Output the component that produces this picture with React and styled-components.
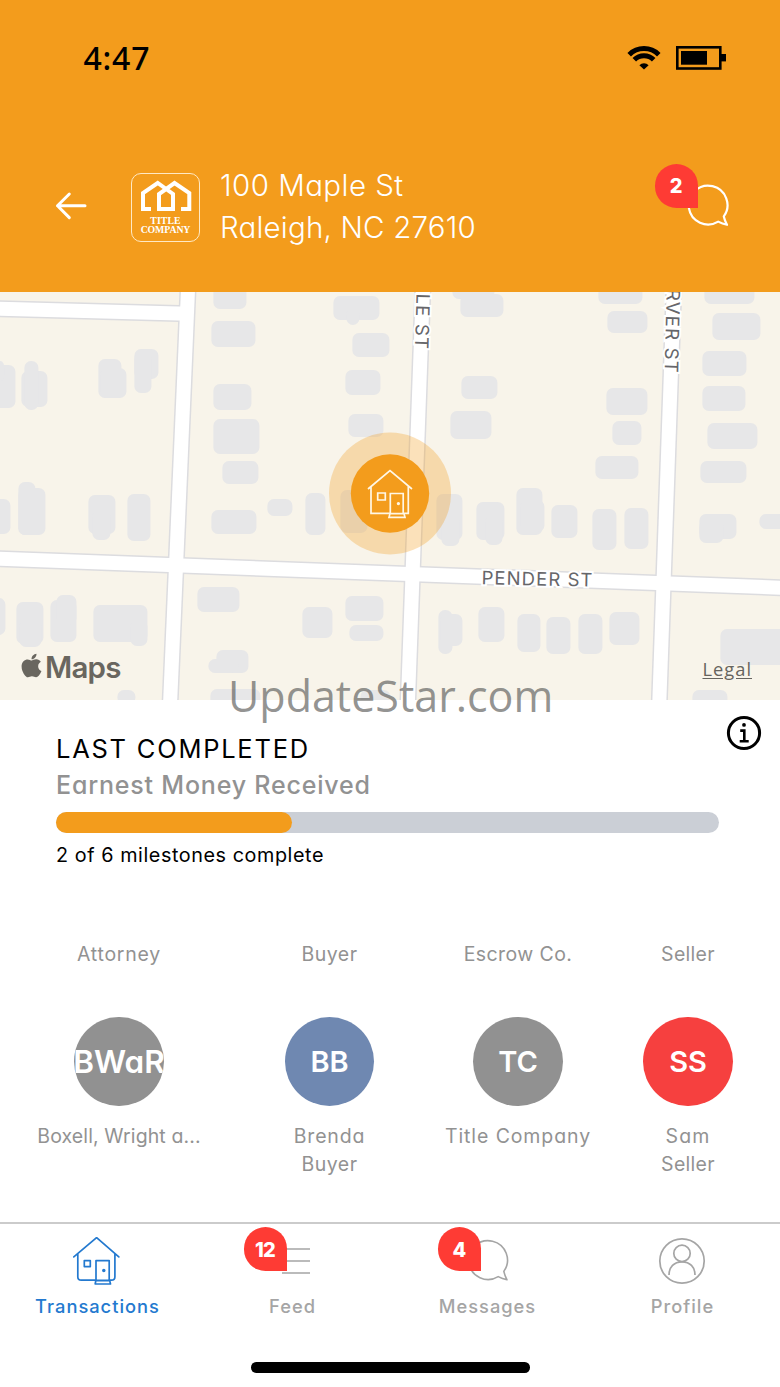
import React from "react";
import styled, { createGlobalStyle } from "styled-components";
import { FaApple } from "react-icons/fa";

const ORANGE = "#f39c1c";
const GEO = `Inter, "Liberation Sans", sans-serif`;

const GlobalStyle = createGlobalStyle`
  * { box-sizing: border-box; }
  body { margin: 0; background: #fff; font-family: ${GEO}; }
`;

const Screen = styled.main`
  width: 780px;
  height: 1387px;
  display: flex;
  flex-direction: column;
  overflow: hidden;
  background: #fff;
`;

/* A single line of text with its own size, weight and tracking */
const Line = styled.div`
  font-family: ${GEO};
  font-feature-settings: "cv11" 1, "calt" 0;
  font-size: ${(p) => p.$size}px;
  line-height: ${(p) => p.$lh}px;
  font-weight: ${(p) => p.$weight || 400};
  letter-spacing: ${(p) => p.$track || 0}px;
  color: ${(p) => p.$color || "#000"};
  white-space: nowrap;
`;

const Header = styled.header`
  height: 292px;
  flex: none;
  background: ${ORANGE};
`;

const StatusBar = styled.div`
  height: 115px;
  padding: 0 54px 0 83.5px;
  display: flex;
  align-items: center;
  justify-content: space-between;
`;

const Clock = styled.div`
  font: 500 32px/40px "Noto Sans", sans-serif;
  letter-spacing: 0.8px;
`;

const TitleBar = styled.div`
  height: 140px;
  margin-top: 21px;
  padding: 0 49px 0 54px;
  display: flex;
  align-items: center;
`;

const Logo = styled.div`
  width: 69px;
  height: 69px;
  margin: 2px 0 0 43px;
  padding-top: 5px;
  border: 1.5px solid #ffe9c4;
  border-radius: 10px;
  display: flex;
  flex-direction: column;
  align-items: center;
  svg { flex: none; margin-bottom: 4px; }
`;

const LogoText = styled.span`
  font: 700 9.8px/9.5px "Liberation Serif", serif;
  letter-spacing: ${(p) => p.$track}px;
  color: #fff;
`;

const Address = styled.div`
  margin: 0 auto 0 20px;
`;

const IconBox = styled.div`
  position: relative;
  width: 48px;
  height: 48px;
  svg { display: block; }
`;

const HeaderAction = styled(IconBox)`
  color: #fff;
`;

const Badge = styled.span`
  position: absolute;
  left: ${(p) => p.$x}px;
  top: ${(p) => p.$y}px;
  width: 43.5px;
  height: 43.5px;
  padding: 1.3px 1px 0 0;
  border-radius: 50% 50% 0 50%;
  background: #fe3b34;
  color: #fff;
  font: 800 20px/43.5px ${GEO};
  letter-spacing: -0.8px;
  text-align: center;
`;

const MapPanel = styled.section`
  position: relative;
  height: 408px;
  flex: none;
  display: flex;
  align-items: flex-end;
  justify-content: space-between;
  padding: 0 28px 15px 18px;
`;

const MapCanvas = styled.svg`
  position: absolute;
  inset: 0;
`;

const MapBrand = styled.div`
  position: relative;
  display: flex;
  align-items: center;
  color: #69665f;
  font: 600 29.5px/36px ${GEO};
  letter-spacing: -0.8px;
  svg { margin-top: -3px; }
`;

const Legal = styled.a`
  position: relative;
  color: #66645f;
  font: 400 18.3px/33px "Open Sans", sans-serif;
  letter-spacing: 1px;
  text-decoration: underline;
  text-underline-offset: 2px;
`;

const Watermark = styled.div`
  position: absolute;
  left: 228px;
  top: 374px;
  z-index: 1;
  font: 400 43px/60px "Open Sans", sans-serif;
  color: rgba(100, 100, 98, 0.7);
  white-space: nowrap;
`;

const Progress = styled.section`
  height: 212px;
  flex: none;
  padding: 32px 17.7px 0 56px;
`;

const ProgressHead = styled.div`
  height: 68px;
  display: flex;
  justify-content: space-between;
`;

const InfoIcon = styled.svg`
  margin-top: -17px;
`;

const Track = styled.div`
  width: 663px;
  height: 21.3px;
  margin: 11.7px 0 8px;
  border-radius: 11px;
  background: #cbcfd6;
`;

const TrackFill = styled.div`
  height: 100%;
  border-radius: 11px;
  background: ${ORANGE};
`;

const People = styled.section`
  height: 310px;
  flex: none;
  overflow: hidden;
  padding: 28px 0 0 25px;
  display: grid;
  grid-template-columns: 188px 233px 144px 196px;
`;

const Person = styled.div`
  display: flex;
  flex-direction: column;
  align-items: center;
`;

const Avatar = styled.div`
  width: 89.5px;
  height: 89.5px;
  margin: 48.7px 0 15.5px;
  padding-top: 1.5px;
  border-radius: 50%;
  overflow: hidden;
  background: ${(p) => p.$bg};
  display: flex;
  align-items: center;
  justify-content: center;
`;

const TabBar = styled.nav`
  height: 130px;
  flex: none;
  border-top: 2px solid #cbcbcb;
  display: grid;
  grid-template-columns: repeat(4, 1fr);
`;

const Tab = styled.div`
  display: flex;
  flex-direction: column;
  align-items: center;
  gap: 7px;
  padding-top: 13px;
  color: ${(p) => (p.$active ? "#2379cf" : "#a5a5a5")};
`;

const TabIcon = styled(IconBox)`
  margin-left: -1px;
`;

const TabLabel = styled.span`
  font: 500 18.3px/28px ${GEO};
  letter-spacing: 1px;
`;

const HomeIndicator = styled.div`
  width: 279px;
  height: 10.4px;
  margin: 10.3px 0 0 251px;
  border-radius: 5.2px;
  background: #000;
`;

const HousePaths = () => (
  <>
    <path d="M2 20 24 1.5 46 20M5 17.5V44.3H24M42.3 17.5V44.3H37.5" />
    <path d="M11.7 24h7.6v7h-7.6zM24.3 44.6V24.5h12.9v20.1zM24 44.6l-1 3.8h16l-1-3.8" />
    <circle cx="32.4" cy="34.6" r="0.8" fill="currentColor" />
  </>
);

const HouseTabIcon = () => (
  <svg width="48" height="50" viewBox="0.4 0.6 48 50" fill="none" stroke="currentColor" strokeWidth="1.7" strokeLinejoin="round" strokeLinecap="round">
    <path d="M1.2 20.5 24 1.2 46.2 20.5M5.2 17.8V40.3q0 3.5 3.5 3.5H23M42.3 17.8V40.3q0 3.5-3.5 3.5H37" />
    <path d="M11.7 24.2h6v6h-6zM23.4 44V24.2h13.2v19.8zM23.2 44.2l-.6 3.4h15.3l-.8-3.4z" />
    <circle cx="31.2" cy="34.2" r="0.9" fill="currentColor" />
  </svg>
);

const ChatIcon = ({ width = 1.6 }) => (
  <svg width="48" height="48" viewBox="0 0 48 48" fill="none" stroke="currentColor" strokeWidth={width} strokeLinejoin="round">
    <path d="M40.8 34.4A19.4 19.4 0 1 0 35.2 39.6Q39.4 41.8 44 42.8Q41.8 38.8 40.8 34.4Z" />
  </svg>
);

const FeedIcon = () => (
  <svg width="48" height="48" viewBox="0 0 48 48" fill="none" stroke="currentColor" strokeWidth="1.7">
    <path d="M14 12H42M14 24H42M14 36H42" />
  </svg>
);

const ProfileIcon = () => (
  <svg width="48" height="48" viewBox="0 0 48 48" fill="none" stroke="currentColor" strokeWidth="1.7">
    <circle cx="24" cy="24" r="22.2" />
    <circle cx="24" cy="16.4" r="8.2" />
    <path d="M11 38C11 30 16 24.8 24 24.8S37 30 37 38" />
  </svg>
);

const BUILDINGS = [
  [213, 285, 33, 24], [211, 321, 44, 26], [-10, 365, 25, 43], [-4, 361, 8, 20],
  [21, 371, 26, 36], [24, 361, 14, 49], [98, 359, 23, 39], [100, 368, 26, 30],
  [134, 349, 24, 30], [134, 352, 17, 41], [213, 384, 38, 26], [213, 419, 46, 35],
  [222, 461, 36, 23], [333, 296, 46, 24], [346, 308, 13, 17], [352, 333, 37, 24],
  [345, 370, 35, 25], [348, 414, 35, 23], [452, 280, 42, 19], [460, 294, 43, 23],
  [598, 284, 44, 20], [607, 311, 40, 22], [704, 284, 50, 20], [712, 313, 48, 27],
  [702, 351, 44, 25], [702, 386, 43, 25], [707, 423, 50, 26], [700, 461, 46, 22],
  [461, 376, 36, 23], [450, 411, 41, 28], [606, 388, 41, 27], [612, 421, 29, 24],
  [595, 456, 43, 23], [-10, 499, 20, 35], [18, 482, 17, 53], [18, 488, 27, 47],
  [88, 495, 27, 39], [92, 510, 18, 30], [127, 494, 23, 47], [211, 510, 45, 24],
  [267, 499, 25, 17], [305, 493, 20, 42], [340, 490, 27, 43], [-10, 598, 15, 37],
  [16, 602, 27, 42], [19, 620, 22, 27], [50, 600, 26, 42], [56, 595, 20, 30],
  [93, 605, 54, 37], [130, 620, 17, 26], [197, 587, 42, 25], [302, 607, 30, 31],
  [345, 596, 38, 25], [349, 625, 34, 16], [216, 650, 32, 23], [208, 659, 30, 14],
  [210, 689, 50, 20], [117, 690, 18, 14], [360, 690, 30, 14], [436, 494, 26, 46],
  [441, 515, 18, 31], [476, 502, 28, 38], [485, 515, 17, 30], [516, 488, 26, 47],
  [520, 500, 24, 32], [551, 505, 26, 33], [592, 509, 24, 41], [624, 508, 24, 41],
  [699, 514, 37, 25], [699, 520, 24, 23], [759, 514, 30, 15], [438, 610, 14, 44],
  [440, 614, 22, 32], [478, 607, 26, 35], [517, 614, 23, 38], [546, 617, 24, 37],
  [578, 614, 24, 40], [609, 612, 30, 33], [720, 629, 70, 36], [692, 690, 35, 20],
];

const ROADS = [
  "M-10 308.5 188 313.8",
  "M188.2 285 170 705",
  "M-10 558.5 790 588",
  "M423 285 407.8 705",
  "M674 285 659.2 705",
];

const StreetMap = () => (
  <MapCanvas width="780" height="408" viewBox="0 292 780 408">
    <rect y="292" width="780" height="408" fill="#f8f4ea" />
    <g fill="#e7e7e8">
      {BUILDINGS.map(([x, y, w, h], i) => (
        <rect key={i} x={x + 0.4} y={y} width={w} height={h} rx="6.5" />
      ))}
    </g>
    <g fill="none" stroke="#dcdcdf" strokeWidth="17">
      {ROADS.map((d) => <path key={d} d={d} />)}
    </g>
    <g fill="none" stroke="#fff" strokeWidth="14">
      {ROADS.map((d) => <path key={d} d={d} />)}
    </g>
    <g fill="#66666a" stroke="#fff" strokeWidth="4" paintOrder="stroke" fontFamily="Inter, sans-serif" fontSize="18.5" letterSpacing="1.2">
      <text x="481.5" y="584.3" textLength="112" transform="rotate(1.2 482 584.3)">PENDER ST</text>
      <text textAnchor="end" transform="translate(415 350) rotate(91.5)">MAPLE ST</text>
      <text textAnchor="end" transform="translate(664.6 373.6) rotate(91.5)">CARVER ST</text>
    </g>
    <circle cx="390" cy="493.5" r="61" fill={ORANGE} fillOpacity="0.3" />
    <circle cx="390" cy="493.5" r="39.2" fill={ORANGE} />
    <g transform="translate(366 469)" fill="none" stroke="#fff7e6" color="#fff7e6" strokeWidth="1.7">
      <HousePaths />
    </g>
  </MapCanvas>
);

const PEOPLE = [
  { role: "Attorney", roleTrack: 0.75, initials: "BWaR", initialsSize: 31.5, bg: "#919191", names: [["Boxell, Wright a...", 0.12]] },
  { role: "Buyer", roleTrack: 0.5, initials: "BB", bg: "#6f88b1", names: [["Brenda", 0.85], ["Buyer", 0.5]] },
  { role: "Escrow Co.", roleTrack: 0.4, initials: "TC", bg: "#919191", names: [["Title Company", 0.9]] },
  { role: "Seller", roleTrack: 0.3, initials: "SS", bg: "#f6403f", names: [["Sam", 1.1], ["Seller", 0.3]] },
];

const TABS = [
  { label: "Transactions", Icon: HouseTabIcon, active: true },
  { label: "Feed", Icon: FeedIcon, badge: 12, x: -24.3 },
  { label: "Messages", Icon: ChatIcon, badge: 4, x: -25.3 },
  { label: "Profile", Icon: ProfileIcon },
];

export default function App() {
  return (
    <Screen>
      <GlobalStyle />
      <Header>
        <StatusBar>
          <Clock>4:47</Clock>
          <svg width="99" height="25" viewBox="627 45 99 25">
            <g fill="none" stroke="#000" strokeWidth="5">
              <path d="M629.2 54.7A21 21 0 0 1 658.8 54.7" />
              <path d="M634.3 59.8A13.7 13.7 0 0 1 653.7 59.8" />
            </g>
            <path d="M644 69.5 639.4 65.2A6.4 6.4 0 0 1 648.6 65.2Z" />
            <rect x="677.3" y="47.3" width="43" height="21.2" fill="none" stroke="#000" strokeWidth="2.6" />
            <rect x="681" y="51" width="26" height="13.7" />
            <rect x="721" y="54" width="5" height="7.4" />
          </svg>
        </StatusBar>
        <TitleBar>
          <svg width="34" height="30" viewBox="54 191 34 30" fill="none" stroke="#fff" strokeWidth="3" strokeLinecap="round" strokeLinejoin="round">
            <path d="M85 205.8H57.5M69.3 194 57.5 205.8 69.3 217.6" />
          </svg>
          <Logo>
            <svg width="56" height="33" viewBox="138 180 56 33" fill="none" stroke="#fff" strokeWidth="4">
              <path d="M151 210H143V194L157.7 184 173 195V210H159V195L174.5 184 189.3 194V210H181" />
            </svg>
            <LogoText $track={0.1}>TITLE</LogoText>
            <LogoText $track={-0.1}>COMPANY</LogoText>
          </Logo>
          <Address>
            <Line $size={29.5} $lh={42} $weight={300} $track={0.45} $color="#fff">100 Maple St</Line>
            <Line $size={29.5} $lh={42} $weight={300} $track={0.2} $color="#fff">Raleigh, NC 27610</Line>
          </Address>
          <HeaderAction>
            <ChatIcon width={2.2} />
            <Badge $x={-28.5} $y={-18}>2</Badge>
          </HeaderAction>
        </TitleBar>
      </Header>

      <MapPanel>
        <StreetMap />
        <MapBrand><FaApple size={27} />Maps</MapBrand>
        <Legal>Legal</Legal>
        <Watermark>UpdateStar.com</Watermark>
      </MapPanel>

      <Progress>
        <ProgressHead>
          <div>
            <Line $size={25.5} $lh={34} $track={1.75}>LAST COMPLETED</Line>
            <Line $size={25} $lh={38} $weight={500} $track={0.8} $color="#929292">Earnest Money Received</Line>
          </div>
          <InfoIcon width="36" height="36" viewBox="726.3 715 36 36" fill="none" stroke="#000">
            <circle cx="744.3" cy="733" r="15.6" strokeWidth="3" />
            <path d="M740.5 730.6H744.6V741M740 741.3H749" strokeWidth="2.6" />
            <circle cx="744.3" cy="724.9" r="1.9" fill="#000" stroke="none" />
          </InfoIcon>
        </ProgressHead>
        <Track><TrackFill style={{ width: 235.6 }} /></Track>
        <Line $size={19.8} $lh={28} $track={0.57}>2 of 6 milestones complete</Line>
      </Progress>

      <People>
        {PEOPLE.map((p) => (
          <Person key={p.role}>
            <Line $size={19.5} $lh={28} $color="#929292" $track={p.roleTrack}>{p.role}</Line>
            <Avatar $bg={p.bg}>
              <Line $size={p.initialsSize || 29} $lh={40} $weight={600} $color="#fff">{p.initials}</Line>
            </Avatar>
            {p.names.map(([name, track]) => (
              <Line key={name} $size={19.5} $lh={28} $color="#929292" $track={track}>{name}</Line>
            ))}
          </Person>
        ))}
      </People>

      <TabBar>
        {TABS.map(({ label, Icon, active, badge, x }) => (
          <Tab key={label} $active={active}>
            <TabIcon>
              <Icon />
              {badge && <Badge $x={x} $y={-9.7}>{badge}</Badge>}
            </TabIcon>
            <TabLabel>{label}</TabLabel>
          </Tab>
        ))}
      </TabBar>
      <HomeIndicator />
    </Screen>
  );
}
